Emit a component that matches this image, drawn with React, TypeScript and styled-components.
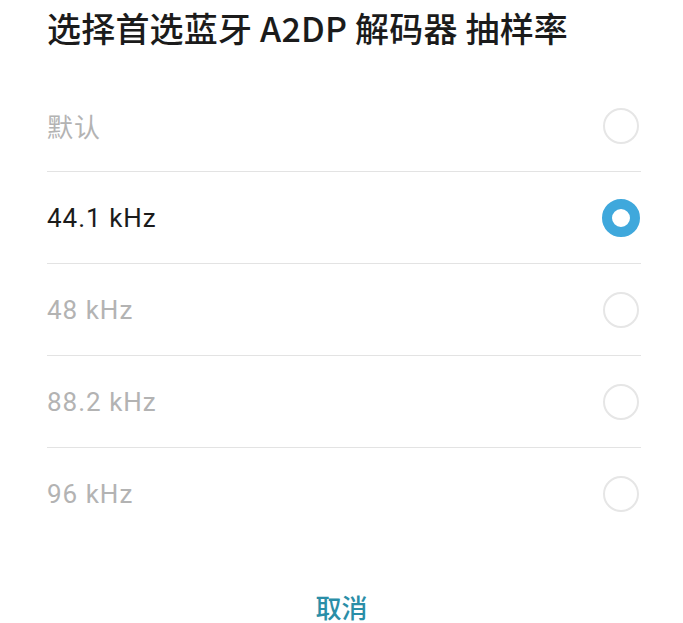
import { FC, useState } from "react";
import styled, { createGlobalStyle } from "styled-components";

const colors = {
  white: "#ffffff",
  text: "#1b1b1b",
  muted: "#b3b3b3",
  line: "#e3e3e3",
  ring: "#e6e6e6",
  blue: "#3fa8dc",
  teal: "#2a8ea7",
};

const GlobalStyle = createGlobalStyle`
  html, body {
    margin: 0;
    padding: 0;
    background-color: ${colors.white};
  }
  body {
    font-family: "Roboto", "Noto Sans CJK SC", sans-serif;
  }
`;

const Dialog = styled.div`
  display: flex;
  flex-direction: column;
  padding: 0 42px 0 47px;
  background-color: ${colors.white};
`;

const Title = styled.h1`
  margin: 0;
  padding-top: 6px;
  font-family: "Noto Sans CJK SC", sans-serif;
  font-size: 34px;
  line-height: 44px;
  font-weight: 500;
  color: ${colors.text};
  letter-spacing: 0.2px;
`;

const List = styled.ul`
  list-style: none;
  margin: 30px 0 0;
  padding: 0;
`;

interface IRow {
  last?: boolean;
}

const Row = styled.li<IRow>`
  display: flex;
  align-items: center;
  justify-content: space-between;
  height: 91px;
  border-bottom: 1px solid ${({ last }) => (last ? "transparent" : colors.line)};
  cursor: pointer;
`;

interface ILabel {
  active?: boolean;
}

const Label = styled.span<ILabel>`
  font-family: "Roboto", "Noto Sans CJK SC", sans-serif;
  font-size: 26px;
  letter-spacing: 1px;
  color: ${({ active }) => (active ? colors.text : colors.muted)};
`;

interface IRadio {
  checked?: boolean;
}

const Radio = styled.span<IRadio>`
  box-sizing: border-box;
  width: ${({ checked }) => (checked ? "38px" : "36px")};
  height: ${({ checked }) => (checked ? "38px" : "36px")};
  margin-right: ${({ checked }) => (checked ? "1px" : "2px")};
  border-radius: 50%;
  border: ${({ checked }) =>
    checked ? `10px solid ${colors.blue}` : `2px solid ${colors.ring}`};
  background-color: ${colors.white};
`;

const Footer = styled.div`
  display: flex;
  justify-content: center;
  padding-top: 52px;
  margin-left: -5px;
`;

const CancelButton = styled.button`
  background: transparent;
  border: 0;
  padding: 0;
  font-family: "Noto Sans CJK SC", sans-serif;
  font-size: 26px;
  line-height: 30px;
  font-weight: 500;
  color: ${colors.teal};
  cursor: pointer;
`;

const options = ["默认", "44.1 kHz", "48 kHz", "88.2 kHz", "96 kHz"];

const App: FC = () => {
  const [selected, setSelected] = useState(1);

  return (
    <>
      <GlobalStyle />
      <Dialog>
        <Title>选择首选蓝牙 A2DP 解码器 抽样率</Title>
        <List>
          {options.map((option, i) => (
            <Row
              key={option}
              last={i === options.length - 1}
              onClick={() => setSelected(i)}
            >
              <Label active={i === selected}>{option}</Label>
              <Radio checked={i === selected} />
            </Row>
          ))}
        </List>
        <Footer>
          <CancelButton>取消</CancelButton>
        </Footer>
      </Dialog>
    </>
  );
};

export default App;
